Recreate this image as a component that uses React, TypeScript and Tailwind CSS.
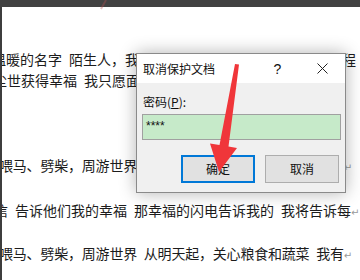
import React from "react";

const EN = "\u2002";

function Ret() {
  return <span className="text-[#9a9a9a] text-[10px] tracking-normal" style={{ fontFamily: '"DejaVu Sans", sans-serif' }}>↵</span>;
}

export default function App() {
  const cjk = '"Noto Sans CJK SC", "Noto Sans", sans-serif';
  return (
    <div className="relative w-[360px] h-[280px] overflow-hidden bg-white" style={{ fontFamily: cjk }}>
      <div className="h-[7px] bg-[#414141]" />
      <div className="flex h-[273px]">
        <div className="w-[2px] bg-[#3d3d3d]" />
        <div className="flex-1 overflow-hidden text-[14px] leading-[20px] text-[#1c1c1c] whitespace-nowrap">
          <div className="mt-[42px] ml-[-10px]">温暖的名字{EN}陌生人，我也为你祝福{EN}愿你有一个灿烂的前程</div>
          <div className="mt-[1px] ml-[-9px]">尘世获得幸福{EN}我只愿面朝大海，春暖花开<Ret /></div>
          <div className="mt-[62px] ml-[-3px] tracking-[-0.2px]">喂马、劈柴，周游世界{EN}从明天起，关心粮食和蔬菜{EN}我有<Ret /></div>
          <div className="mt-[22px] ml-[-8px]">信{EN}告诉他们我的幸福{EN}那幸福的闪电告诉我的{EN}我将告诉每<Ret /></div>
          <div className="mt-[20px] ml-[-3px] tracking-[-0.2px]">喂马、劈柴，周游世界{EN}从明天起，关心粮食和蔬菜{EN}我有<Ret /></div>
          <div className="mt-[19px] ml-[-6px]">一所房子，面朝大海，春暖花开{EN}从明天起，和每一个亲人通</div>
        </div>
      </div>

      {/* dialog */}
      <div className="absolute left-[136px] top-[53px] w-[210px] h-[140px] border border-[#8a8a8a] bg-[#f0f0f0] flex flex-col shadow-[0_0_16px_rgba(0,0,0,0.3)] text-[12px] leading-[16px] text-[#111]">
        <div className="h-[29px] bg-white flex items-center">
          <div className="pl-[6px] flex-1">取消保护文档</div>
          <div className="w-[45px] h-full flex items-center justify-center text-[14px]" style={{ fontFamily: '"Liberation Sans", sans-serif' }}>?</div>
          <div className="w-[45px] h-full flex items-center justify-center">
            <svg width="11" height="11" viewBox="0 0 11 11">
              <path d="M0.5 0.5 L10.5 10.5 M10.5 0.5 L0.5 10.5" stroke="#222" strokeWidth="1" />
            </svg>
          </div>
        </div>
        <div className="flex-1 flex flex-col">
          <div className="mt-[11px] pl-[6px]">密码(<span className="underline">P</span>):</div>
          <div className="mt-[4px] ml-[5px] w-[199px] h-[26px] border border-[#a0a0a0] bg-[#c6eac9] pl-[3px] pt-[3px] text-[12px]" style={{ fontFamily: '"Liberation Sans", sans-serif' }}>****</div>
          <div className="mt-[15px] flex justify-end gap-[10px] pr-[6px]">
            <div className="w-[74px] h-[28px] border-2 border-[#0078d7] bg-[#e1e1e1] flex items-center justify-center">确定</div>
            <div className="w-[74px] h-[28px] border border-[#adadad] bg-[#e1e1e1] flex items-center justify-center">取消</div>
          </div>
        </div>
      </div>

      {/* red arrow */}
      <svg className="absolute left-0 top-0 pointer-events-none" width="360" height="280" viewBox="0 0 360 280">
        <line x1="106" y1="0" x2="101" y2="9" stroke="#b85050" strokeOpacity="0.35" strokeWidth="2" />
        <polygon points="235,64 239,64.5 228.5,146.5 237,148 219,172 210,143.5 219.5,145" fill="#f0363a" />
      </svg>
    </div>
  );
}
